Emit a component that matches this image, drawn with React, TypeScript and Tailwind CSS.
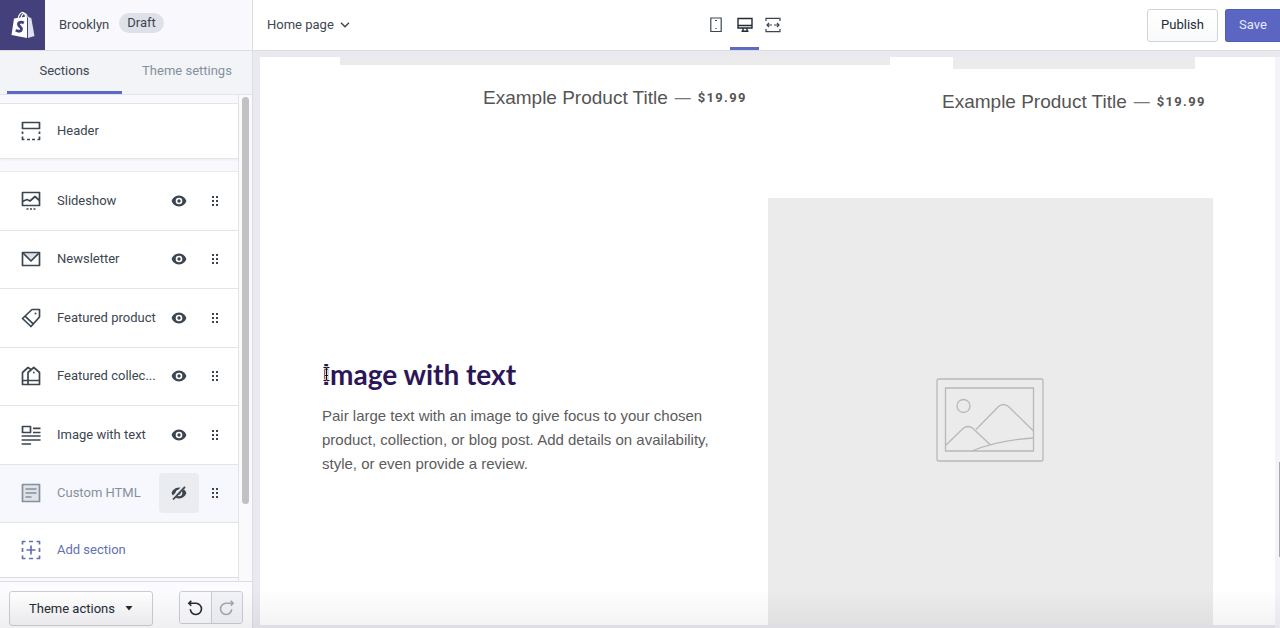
import type { ReactNode } from "react";

interface Section {
  label: string;
  icon: ReactNode;
  hidden?: boolean;
}

const Icon = ({ children }: { children: ReactNode }) => (
  <svg viewBox="0 0 20 20" className="w-5 h-5 shrink-0" fill="none" stroke="currentColor" strokeWidth="1.7" strokeLinejoin="round" aria-hidden="true">
    {children}
  </svg>
);

const headerIcon = (
  <Icon>
    <path d="M1.5 1.5h17v6h-17z" />
    <path d="M1.5 10.5v2.5M18.5 10.5v2.5M1.5 15.5v3h2M18.5 15.5v3h-2M6 18.5h3M11 18.5h3" />
  </Icon>
);

const sections: Section[] = [
  {
    label: "Slideshow",
    icon: (
      <Icon>
        <path d="M1.5 1.5h17v13h-17z" />
        <path d="M1.5 10.5l4.5-2 3 1.5 5-4.5 4.5 4" />
        <path d="M5.5 18h2M9 18h2M12.5 18h2" />
      </Icon>
    ),
  },
  {
    label: "Newsletter",
    icon: (
      <Icon>
        <path d="M2 3.5h16l-8 8z" fill="#dfe3e8" stroke="none" />
        <path d="M1.5 3.5h17v13h-17z" />
        <path d="M2 4l8 8 8-8" />
      </Icon>
    ),
  },
  {
    label: "Featured product",
    icon: (
      <Icon>
        <path d="M11 1.5h7.500v7.500L10 18.500 1.500 10.500z" />
        <path d="M4 8.200l8.500 8" />
        <circle cx="14.500" cy="5.500" r="1" fill="currentColor" stroke="none" />
      </Icon>
    ),
  },
  {
    label: "Featured collec...",
    icon: (
      <Icon>
        <path d="M7 18.5V6.5l5.800-5 5.700 5v12z" />
        <path d="M7 18.5H1.5V6.5l5.500-5 3 2M1.5 14.5h17" />
        <circle cx="12.800" cy="6.500" r=".9" fill="currentColor" stroke="none" />
      </Icon>
    ),
  },
  {
    label: "Image with text",
    icon: (
      <Icon>
        <path d="M1.5 1.5h8v6h-8zM12 3.300h7.500M12 7.500h7.500M.6 11h19M.6 15h19M.6 19h9.500" />
      </Icon>
    ),
  },
  {
    label: "Custom HTML",
    hidden: true,
    icon: (
      <Icon>
        <path d="M1.5 1.5h17v17h-17z" fill="#dfe3e8" />
        <path d="M4.5 6h11M4.5 10h11M4.5 14h6" />
      </Icon>
    ),
  },
];

const EyeIcon = ({ off = false }: { off?: boolean }) => (
  <svg viewBox="0 0 16 14" className="w-4 h-3.5" aria-hidden="true">
    <path
      d="M8 1.500C3.800 1.500 1.200 4.800.6 7c.6 2.200 3.200 5.500 7.400 5.500s6.800-3.300 7.400-5.500C14.800 4.800 12.200 1.500 8 1.500zm0 2.200a3.300 3.300 0 1 1 0 6.600 3.300 3.300 0 0 1 0-6.600z"
      fill="currentColor"
      fillRule="evenodd"
    />
    <circle cx="8" cy="7" r="1.7" fill="currentColor" />
    {off && (
      <>
        <path d="M1.500 12.500L13 .5" stroke="#ebecf0" strokeWidth="3.600" />
        <path d="M2 13.500L14 .8" stroke="currentColor" strokeWidth="1.800" />
      </>
    )}
  </svg>
);

const DragIcon = () => (
  <svg viewBox="0 0 6 10" className="w-1.5 h-2.5" fill="currentColor" aria-hidden="true">
    <path d="M0 0h2v2H0zM4 0h2v2H4zM0 4h2v2H0zM4 4h2v2H4zM0 8h2v2H0zM4 8h2v2H4z" />
  </svg>
);

const SectionRow = ({ label, icon, hidden = false }: Section) => (
  <li
    className={`flex flex-1 items-center border-b border-[#e3e4e9] pl-[21px] pr-5 ${
      hidden ? "bg-[#f7f8fd] text-[#84919c]" : "bg-white text-[#3c4650]"
    }`}
  >
    {icon}
    <span className="ml-4 min-w-0 flex-1 whitespace-nowrap">{label}</span>
    <button
      type="button"
      aria-label={`${hidden ? "Show" : "Hide"} ${label}`}
      className={`flex h-10 w-10 shrink-0 items-center justify-center rounded-sm text-[#3c4650] ${hidden ? "bg-[#ebecf0]" : ""}`}
    >
      <EyeIcon off={hidden} />
    </button>
    <button type="button" aria-label={`Move ${label}`} className="ml-[13px] flex h-10 w-1.5 shrink-0 items-center text-[#3c4650]">
      <DragIcon />
    </button>
  </li>
);

const Sidebar = () => (
  <aside className="flex w-[253px] shrink-0 flex-col border-r border-[#dcdde3] bg-[#f8f8fd]">
    <div className="flex h-[51px] shrink-0 items-center border-b border-[#dcdde3]">
      <a href="#" aria-label="Shopify" className="flex h-[50px] w-[45px] items-center justify-center bg-[#43407c]">
        <svg viewBox="0 0 24 28" className="h-7 w-6" aria-hidden="true">
          <path d="M7 8C7.500 4 10 1.200 12 1.500c2 .3 2.500 3 2.500 6M10 7c.5-3 2.500-5 4-4.500 1.300.4 2 2 2.200 4" fill="none" stroke="#fff" strokeWidth="1.200" />
          <path d="M3 7.500L16 5.500V27L.5 24z" fill="#fff" />
          <path d="M17 5.500l3.300 1.700L23.500 25 17 27z" fill="#dfe0f0" />
          <path d="M12.800 12c-2.800-1.600-5.500-.6-5.300 1.500.2 2 3.300 2.600 2.900 4.900-.4 2.300-3 2.300-5.600.7" fill="none" stroke="#43407c" strokeWidth="2.800" />
        </svg>
      </a>
      <span className="ml-3.5 text-[#3c4650]">Brooklyn</span>
      <span className="mb-1 ml-2.5 rounded-full bg-[#dfe1e8] px-2 text-[#3c4650]">Draft</span>
    </div>

    <nav className="flex h-11 shrink-0 border-b border-[#e3e4e9] bg-[#f3f4f8] pl-[7px]">
      <button type="button" className="w-[115px] border-b-[3px] border-[#5c6ac4] text-[#3c4650]">
        Sections
      </button>
      <button type="button" className="flex-1 pb-[3px] text-[#84919c]">
        Theme settings
      </button>
    </nav>

    <div className="flex min-h-0 flex-1">
      <div className="flex min-w-0 flex-1 flex-col border-r border-[#e3e4e9]">
        <div className="mt-2 flex h-14 shrink-0 items-center border-y border-[#e3e4e9] bg-white pl-[21px] text-[#3c4650] shadow-xs">
          {headerIcon}
          <span className="ml-4">Header</span>
        </div>
        <ul className="mt-3 flex flex-1 flex-col border-t border-[#e9eaef]">
          {sections.map((section) => (
            <SectionRow key={section.label} {...section} />
          ))}
        </ul>
        <button
          type="button"
          className="mb-[3px] flex h-[55px] shrink-0 items-center border-b border-[#dcdde3] bg-white pl-[21px] text-[#6370b0]"
        >
          <Icon>
            <path d="M1.5 4.500v-3h3M8 1.500h4M15.500 1.500h3v3M18.500 8v4M18.500 15.500v3h-3M12 18.500H8M4.500 18.500h-3v-3M1.500 12V8M10 5.500v9M5.500 10h9" />
          </Icon>
          <span className="ml-4">Add section</span>
        </button>
      </div>
      {/* Scrollbar */}
      <div className="w-[13px] shrink-0 bg-[#fafafc] px-[3px] pt-0.5">
        <div className="h-[84%] w-[7px] rounded-full bg-[#c1c1c3]" />
      </div>
    </div>

    <div className="flex h-[47px] shrink-0 items-start justify-between border-t border-[#dcdde3] bg-[#fcfcfe] px-[9px] pt-[9px]">
      <button
        type="button"
        className="flex h-[35px] w-36 items-center justify-center gap-2.5 rounded-[3px] border border-[#c9ced6] bg-linear-to-b from-white to-[#f5f5f8] text-[#212b36]"
      >
        Theme actions
        <svg viewBox="0 0 8 5" className="w-2 h-[5px]" fill="currentColor" aria-hidden="true">
          <path d="M.5 0h7L4 4.500z" />
        </svg>
      </button>
      <div className="flex h-[33px] w-16 overflow-hidden rounded-[3px] border border-[#c9ced6]">
        <button type="button" aria-label="Undo" className="flex flex-1 items-center justify-center border-r border-[#c9ced6] bg-[#fafafc] text-[#212b36]">
          <svg viewBox="0 0 16 16" className="w-4 h-4" fill="none" stroke="currentColor" strokeWidth="1.600" aria-hidden="true">
            <path d="M4.300.8L1.800 3.300l2.500 2.500M1.800 3.300H9a5.600 5.600 0 1 1-5.700 6" />
          </svg>
        </button>
        <button type="button" aria-label="Redo" className="flex flex-1 items-center justify-center bg-[#f2f3f7] text-[#a3a9b2]">
          <svg viewBox="0 0 16 16" className="w-4 h-4" fill="none" stroke="currentColor" strokeWidth="1.600" aria-hidden="true">
            <path d="M11.700.8l2.500 2.500-2.500 2.500M14.200 3.300H7a5.600 5.600 0 1 0 5.700 6" />
          </svg>
        </button>
      </div>
    </div>
  </aside>
);

const TopBar = () => (
  <header className="grid h-[51px] shrink-0 grid-cols-[1fr_auto_1fr] border-b border-[#dcdde3] bg-white text-[#3c4650]">
    <button type="button" className="flex items-center gap-1.5 justify-self-start pl-3.5">
      Home page
      <svg viewBox="0 0 10 6" className="w-2.5 h-1.5" fill="none" stroke="currentColor" strokeWidth="1.400" aria-hidden="true">
        <path d="M1 .8l4 4 4-4" />
      </svg>
    </button>
    <div className="flex pr-11">
      <button type="button" aria-label="Mobile" className="flex w-7 items-center justify-center">
        <svg viewBox="0 0 12 16" className="w-3 h-4" fill="none" stroke="currentColor" strokeWidth="1.200" aria-hidden="true">
          <path d="M.8 1h10.400v13.500H.8zM5 3.500h2M5.300 11.500h1.400" />
        </svg>
      </button>
      <button type="button" aria-label="Desktop" className="flex w-[29px] items-center justify-center border-b-[3px] border-[#5c6ac4] pt-[3px] text-[#212b36]">
        <svg viewBox="0 0 16 16" className="w-4 h-4" fill="none" stroke="currentColor" strokeWidth="1.400" aria-hidden="true">
          <path d="M1 1.500h14v9.500H1zM1 8.500h14M6 11v3.500M10 11v3.500M4.500 14.300h7" />
        </svg>
      </button>
      <button type="button" aria-label="Full width" className="flex w-7 items-center justify-center">
        <svg viewBox="0 0 16 16" className="w-4 h-4" fill="none" stroke="currentColor" strokeWidth="1.200" aria-hidden="true">
          <path d="M1 4V1.300h14V4M1 12v2.700h14V12M1.500 8H7M14.500 8H9M4 6L2 8l2 2M12 6l2 2-2 2" />
        </svg>
      </button>
    </div>
    <div className="flex items-center justify-self-end gap-[7px]">
      <button type="button" className="h-[33px] w-[71px] rounded-[3px] border border-[#d0d4da] bg-linear-to-b from-white to-[#f9fafb] text-[#212b36]">
        Publish
      </button>
      <button type="button" className="h-[33px] w-[55px] rounded-l-[3px] border border-r-0 border-[#4f5bb4] bg-[#5a66c1] text-[#e8eafc]">
        Save
      </button>
    </div>
  </header>
);

const ProductTitle = () => (
  <p className="flex items-center justify-center whitespace-nowrap font-['Liberation_Sans',sans-serif] text-[19px] leading-6 text-[#555]">
    Example Product Title
    <span className="mx-[7px] text-base text-[#777]">—</span>
    <span className="font-['Roboto',sans-serif] text-[13px] font-bold tracking-widest">$19.99</span>
  </p>
);

const Preview = () => (
  <main className="mt-1.5 mb-[3px] ml-[7px] flex min-h-0 flex-1 flex-col overflow-hidden bg-white">
    <div className="flex shrink-0 gap-[63px] px-20">
      <div className="min-w-0 flex-[549]">
        <div className="mb-[21px] h-2 bg-[#ebebeb]" />
        <ProductTitle />
      </div>
      <div className="flex min-w-0 flex-[242] flex-col items-center">
        <div className="mb-[21px] h-3 w-full bg-[#ebebeb]" />
        <ProductTitle />
      </div>
    </div>

    <div className="mt-[84px] flex min-h-[444px] shrink-0 justify-between px-[62px]">
      <div className="flex w-[400px] flex-col justify-center pb-2 font-['Liberation_Sans',sans-serif]">
        <div className="relative">
          <h2 className="font-['Lato',sans-serif] text-[28px] leading-9 font-bold text-[#2c1657]">Image with text</h2>
          {/* Text cursor */}
          <svg viewBox="0 0 9 16" className="absolute top-2.5 left-0 h-4 w-[9px]" fill="none" aria-hidden="true">
            <path d="M1.500 1.500h2l1 1 1-1h2M4.500 2.500v11M1.500 14.500h2l1-1 1 1h2M3 9.500h3" stroke="#fff" strokeWidth="2.600" />
            <path d="M1.500 1.500h2l1 1 1-1h2M4.500 2.500v11M1.500 14.500h2l1-1 1 1h2M3 9.500h3" stroke="#111" strokeWidth="1.100" />
          </svg>
        </div>
        <p className="mt-3 text-[15px] leading-6 text-[#5c5c5c]">
          Pair large text with an image to give focus to your chosen product, collection, or blog post. Add details on
          availability, style, or even provide a review.
        </p>
      </div>
      <div className="flex w-1/2 items-center justify-center bg-[#ebebeb]">
        <svg viewBox="0 0 108 84" className="h-[84px] w-[108px]" fill="none" stroke="#b8b8b8" strokeWidth="1.300" aria-hidden="true">
          <rect x="1" y="1" width="106" height="82" rx="1.500" />
          <path d="M9.500 10h88v63h-88z" />
          <circle cx="27.500" cy="28" r="6.500" />
          <path d="M9.500 67.500L27 50.500q5-4 10 0L54 66.500M40 51.500L62 29q5.500-5 11 0l24.500 24M36 73Q62 62 97.500 60" />
        </svg>
      </div>
    </div>
  </main>
);

export default function App() {
  return (
    <div className="relative flex h-screen overflow-hidden bg-[#e9e9ef] font-['Roboto',sans-serif] text-[13px] leading-5">
      <Sidebar />
      <div className="flex min-w-0 flex-1 flex-col">
        <TopBar />
        <div className="flex min-h-0 flex-1">
          <Preview />
          {/* Page scrollbar */}
          <div className="mt-1.5 flex w-[5px] shrink-0 flex-col items-end bg-[#f3f3f9]">
            <div className="flex-[405]" />
            <div className="w-px flex-[95] bg-[#a9a9b0]" />
            <div className="flex-[71]" />
          </div>
        </div>
      </div>
      <div className="pointer-events-none absolute inset-x-0 bottom-0 h-10 bg-linear-to-b from-transparent to-black/5" />
    </div>
  );
}
